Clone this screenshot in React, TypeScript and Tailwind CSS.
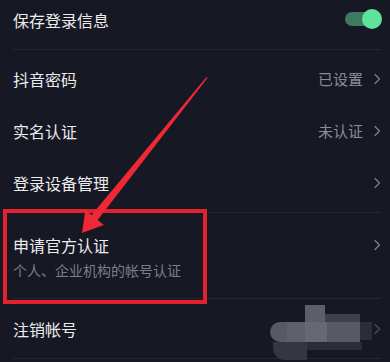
import React from "react";

const font = { fontFamily: '"Noto Sans CJK SC", "Noto Sans", sans-serif' };

function Chevron({ dim = false }: { dim?: boolean }) {
  return (
    <svg width="8" height="12" viewBox="0 0 8 12" className="shrink-0">
      <path
        d="M2 1.5 L6.5 6 L2 10.5"
        fill="none"
        stroke={dim ? "#4a4b55" : "#7d7e88"}
        strokeWidth="1.3"
        strokeLinecap="round"
        strokeLinejoin="round"
      />
    </svg>
  );
}

function Row({ title, value }: { title: string; value?: string }) {
  return (
    <div className="flex h-[52px] items-center justify-between">
      <span className="text-[16px] text-[#ececee]">{title}</span>
      <div className="flex items-center gap-[10px]">
        {value && <span className="text-[15px] text-[#8b8c96]">{value}</span>}
        <Chevron />
      </div>
    </div>
  );
}

export default function App() {
  return (
    <div className="relative h-[362px] w-[390px] overflow-hidden bg-[#161823]" style={font}>
      <div className="pl-[13px] pr-[9px]">
        {/* save login */}
        <div className="flex h-[50px] items-start justify-between border-b border-[#24252f] pt-[9px]">
          <span className="mt-[-1px] text-[16px] text-[#ececee]">保存登录信息</span>
          <div className="relative mr-[-1px] mt-[0px] h-[20px] w-[37px]">
            <div className="absolute left-0 top-[3px] h-[14px] w-[28px] rounded-full bg-[#3e7a5f]" />
            <div className="absolute right-0 top-0 h-[20px] w-[20px] rounded-full bg-[#5fe39c]" />
          </div>
        </div>

        <div className="border-b border-[#24252f] py-[3px]">
          <Row title="抖音密码" value="已设置" />
          <Row title="实名认证" value="未认证" />
          <Row title="登录设备管理" />
        </div>

        <div className="flex h-[86px] items-start justify-between border-b border-[#24252f] pt-[19px]">
          <div className="flex flex-col">
            <span className="text-[16px] leading-[26px] text-[#ececee]">申请官方认证</span>
            <span className="mt-[1px] text-[14px] leading-[22px] text-[#7d7e88]">个人、企业机构的帐号认证</span>
          </div>
          <div className="pt-[7px]">
            <Chevron />
          </div>
        </div>

        <div className="flex h-[60px] items-center justify-between border-b border-[#24252f]">
          <span className="text-[16px] text-[#ececee]">注销帐号</span>
          <Chevron dim />
        </div>
      </div>

      {/* mosaic blur */}
      <div className="absolute left-[305px] top-[305px] h-[18px] w-[20px] bg-[#5d5e68]" />
      <div className="absolute left-[325px] top-[314px] h-[9px] w-[35px] bg-[#3f404b]" />
      <div className="absolute left-[270px] top-[322px] h-[20px] w-[90px] rounded-l-[10px] bg-[#585964]" />
      <div className="absolute left-[287px] top-[322px] h-[20px] w-[18px] bg-[#5f606a]" />
      <div className="absolute left-[305px] top-[322px] h-[20px] w-[22px] bg-[#676872]" />
      <div className="absolute left-[360px] top-[322px] h-[18px] w-[12px] bg-[#2c2d37]" />
      <div className="absolute left-[273px] top-[342px] h-[18px] w-[34px] rounded-bl-[12px] bg-[#35363f]" />
      <div className="absolute left-[307px] top-[342px] h-[8px] w-[55px] bg-[#2b2c36]" />

      {/* red annotation box */}
      <div className="absolute left-[3px] top-[209px] h-[95px] w-[204px] border-[4px] border-[#e3222e]" />

      {/* red arrow */}
      <svg className="absolute left-0 top-0" width="390" height="362" viewBox="0 0 390 362">
        <polygon
          points="207.5,77.9 97.6,219.9 103.8,225 82,233 85.4,209.8 91.6,214.9 206.5,77.1"
          fill="#ee2935"
        />
      </svg>
    </div>
  );
}
